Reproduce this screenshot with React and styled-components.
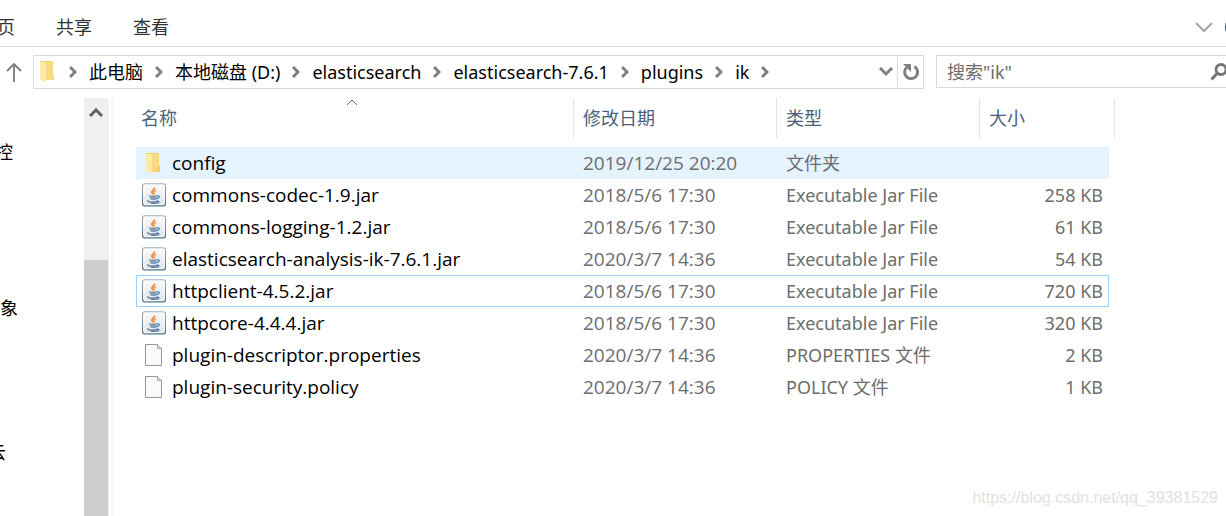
import React from "react";
import styled, { createGlobalStyle } from "styled-components";

const GlobalStyle = createGlobalStyle`
  * {
    box-sizing: border-box;
  }
  body {
    margin: 0;
    background: #fff;
    color: #000;
    font-family: "Noto Sans", "Noto Sans CJK SC", sans-serif;
    font-size: 18px;
    line-height: 24px;
  }
  button, input {
    font: inherit;
    color: inherit;
    border: none;
    padding: 0;
    background: none;
  }
  svg {
    display: block;
    flex-shrink: 0;
  }
`;

const Page = styled.div`
  position: relative;
  display: flex;
  flex-direction: column;
  min-height: 100vh;
  overflow: hidden;
`;

const Ribbon = styled.div`
  display: flex;
  align-items: center;
  justify-content: space-between;
  height: 47px;
  padding-top: 8px;
  margin-right: -23px;
  border-bottom: 1px solid #dadbdc;
`;

const Tabs = styled.nav`
  display: flex;
  gap: 41px;
  margin-left: -21px;
`;

const Tab = styled.button`
  color: #333;
`;

const RibbonTools = styled.div`
  display: flex;
  align-items: center;
  gap: 12px;
`;

const Toolbar = styled.div`
  display: flex;
  padding-top: 8px;
  margin-right: -13px;
`;

const IconButton = styled.button`
  display: flex;
  align-items: center;
  justify-content: center;
  width: ${(props) => props.$width}px;
`;

const UpButton = styled(IconButton)`
  padding-right: 6px;
`;

const AddressBar = styled.div`
  display: flex;
  flex: 1;
  height: 34px;
  border: 1px solid #d9d9d9;
`;

const Crumbs = styled.div`
  display: flex;
  flex: 1;
  align-items: center;
  padding-left: 6px;
`;

const Crumb = styled.a`
  color: #000;
  text-decoration: none;
  white-space: nowrap;
`;

const CrumbArrow = styled.span`
  display: flex;
  justify-content: center;
  width: 32px;
`;

const Refresh = styled(IconButton)`
  border-left: 1px solid #d9d9d9;
`;

const SearchBox = styled.label`
  display: flex;
  align-items: center;
  width: 303px;
  height: 33px;
  margin-left: 12px;
  padding: 0 10px;
  border: 1px solid #d9d9d9;
`;

const SearchInput = styled.input`
  flex: 1;
  min-width: 0;
  outline: none;
  &::placeholder {
    color: #6d6d6d;
    opacity: 1;
  }
`;

const Body = styled.div`
  display: flex;
  flex: 1;
  padding-top: 9px;
`;

const Sidebar = styled.aside`
  display: flex;
  width: 113px;
  border-right: 2px solid #f7f7f7;
`;

const Tree = styled.div`
  flex: 1;
  padding-top: 42px;
`;

const TreeItem = styled.div`
  height: ${(props) => props.$height}px;
  margin-left: ${(props) => -props.$cut}px;
`;

const ScrollTrack = styled.div`
  width: 25px;
  margin-right: 2px;
  padding-right: 1px;
  display: flex;
  flex-direction: column;
  background: #f0f0f0;
`;

const ScrollUp = styled.button`
  display: flex;
  justify-content: center;
  height: 162px;
  padding-top: 10px;
`;

const ScrollThumb = styled.div`
  flex: 1;
  background: #cdcdcd;
`;

const Files = styled.main`
  flex: 1;
  padding-left: 23px;
`;

const Table = styled.table`
  table-layout: fixed;
  width: 979px;
  border-collapse: separate;
  border-spacing: 0;
`;

const HeadCell = styled.th`
  padding: 0 0 9px;
  font-weight: normal;
  text-align: left;
  color: #4c607a;
`;

const HeadLabel = styled.div`
  display: flex;
  flex-direction: column;
  justify-content: flex-end;
  height: 40px;
  padding: 0 0 8px ${(props) => (props.$first ? 5 : 9)}px;
  border-right: 1px solid #e5e5e5;
`;

const SortMark = styled.span`
  display: flex;
  justify-content: center;
  padding: 2px 10px 0 0;
`;

const Row = styled.tr`
  td {
    background: ${(props) => (props.$state === "hover" ? "#e5f3ff" : "none")};
    border: 0 solid ${(props) => (props.$state === "focus" ? "#99d1ff" : "transparent")};
    border-width: 1px 0;
  }
  td:first-child {
    border-left-width: 1px;
  }
  td:last-child {
    border-right-width: 1px;
  }
`;

const Cell = styled.td`
  height: 32px;
  padding: 0 5px 0 9px;
  color: #6d6d6d;
  text-align: ${(props) => (props.$right ? "right" : "left")};
  white-space: nowrap;
`;

const NameCell = styled(Cell)`
  padding-left: 5px;
  color: #000;
  font-family: "Open Sans", "Noto Sans CJK SC", sans-serif;
  font-size: 19px;
`;

const DateCell = styled(Cell)`
  font-family: "Open Sans", "Noto Sans CJK SC", sans-serif;
  font-size: 19px;
`;

const FileName = styled.div`
  display: flex;
  align-items: center;
  gap: 6px;
`;

const Watermark = styled.div`
  position: absolute;
  right: 8px;
  bottom: 6px;
  color: #e2e2e2;
  font-family: "Liberation Sans", sans-serif;
  font-size: 16px;
`;

const Chevron = ({ d, width, height, color = "#808080", stroke = 3 }) => (
  <svg width={width} height={height} viewBox={`0 0 ${width} ${height}`} fill="none">
    <path d={d} stroke={color} strokeWidth={stroke} />
  </svg>
);

const FolderIcon = () => (
  <svg width="24" height="24" viewBox="0 0 24 24">
    <path d="M9 2h8v13l1 1v5H9z" fill="#f8da80" />
    <path d="M17 15l1 1v5h-5z" fill="#f1cc6a" />
    <path d="M4 2h2l4 3v17l-1 1-5-3z" fill="#ffe9a6" />
    <path d="M4 2h10v1H6z" fill="#f5d066" />
  </svg>
);

const JarIcon = () => (
  <svg width="24" height="24" viewBox="0 0 24 24" fill="none">
    <defs>
      <linearGradient id="jar" x1="0" y1="0" x2="0" y2="1">
        <stop offset="0" stopColor="#fdfdfd" />
        <stop offset="1" stopColor="#dfe2e4" />
      </linearGradient>
      <linearGradient id="jarEdge" x1="0" y1="0" x2="0" y2="1">
        <stop offset="0" stopColor="#9db0be" />
        <stop offset="1" stopColor="#4f6b80" />
      </linearGradient>
    </defs>
    <rect x="0.6" y="0.8" width="22.8" height="22" rx="2" fill="url(#jar)" stroke="url(#jarEdge)" strokeWidth="1.2" />
    <rect x="1.8" y="2" width="20.4" height="19.6" rx="1" stroke="#fff" />
    <path d="M12.400 4.500c1.200 1.800-2.600 2.700-2.600 4.500 0 1 .9 1.500 1.400 2.400" stroke="#ee8130" strokeWidth="1.700" />
    <path d="M14.300 7.500c-2 .8-2.800 1.500-2.100 2.500.4.600.2 1.100-.3 1.600" stroke="#ee8130" strokeWidth="1.100" />
    <path d="M7 12.700c1.500.9 6 .9 8 0" stroke="#55799a" strokeWidth="1.200" />
    <path d="M7.800 14.200h7v1.600c0 1.500-6 1.600-6.600.3z" fill="#7e9ab2" />
    <path d="M15 13c3.200-.7 2.600 2.200-.2 2.700" stroke="#55799a" strokeWidth="1.200" />
    <path d="M6.500 17.500c-3.500 1.600 6 2.400 10.500.4M9 20.300c3.500.4 7 0 8.500-1.200" stroke="#55799a" strokeWidth="1.200" />
  </svg>
);

const FileIcon = () => (
  <svg width="24" height="24" viewBox="0 0 24 24" fill="none">
    <path d="M3.500 1.500h12l4 4v17h-16z" fill="#f9fafa" stroke="#979797" />
    <path d="M15.500 1.500v4h4" fill="#e5e5e5" stroke="#a0a0a0" />
  </svg>
);

const icons = { folder: FolderIcon, jar: JarIcon, file: FileIcon };

const crumbs = ["此电脑", "本地磁盘 (D:)", "elasticsearch", "elasticsearch-7.6.1", "plugins", "ik"];

const files = [
  { icon: "folder", name: "config", date: "2019/12/25 20:20", type: "文件夹", size: "", state: "hover" },
  { icon: "jar", name: "commons-codec-1.9.jar", date: "2018/5/6 17:30", type: "Executable Jar File", size: "258 KB" },
  { icon: "jar", name: "commons-logging-1.2.jar", date: "2018/5/6 17:30", type: "Executable Jar File", size: "61 KB" },
  { icon: "jar", name: "elasticsearch-analysis-ik-7.6.1.jar", date: "2020/3/7 14:36", type: "Executable Jar File", size: "54 KB" },
  { icon: "jar", name: "httpclient-4.5.2.jar", date: "2018/5/6 17:30", type: "Executable Jar File", size: "720 KB", state: "focus" },
  { icon: "jar", name: "httpcore-4.4.4.jar", date: "2018/5/6 17:30", type: "Executable Jar File", size: "320 KB" },
  { icon: "file", name: "plugin-descriptor.properties", date: "2020/3/7 14:36", type: "PROPERTIES 文件", size: "2 KB" },
  { icon: "file", name: "plugin-security.policy", date: "2020/3/7 14:36", type: "POLICY 文件", size: "1 KB" },
];

const FileRow = ({ file }) => {
  const Icon = icons[file.icon];
  return (
    <Row $state={file.state}>
      <NameCell>
        <FileName>
          <Icon />
          {file.name}
        </FileName>
      </NameCell>
      <DateCell>{file.date}</DateCell>
      <Cell>{file.type}</Cell>
      <Cell $right>{file.size}</Cell>
    </Row>
  );
};

const App = () => {
  return (
    <Page>
      <GlobalStyle />
      <Ribbon>
        <Tabs>
          <Tab>主页</Tab>
          <Tab>共享</Tab>
          <Tab>查看</Tab>
        </Tabs>
        <RibbonTools>
          <IconButton $width={18} aria-label="Expand ribbon">
            <Chevron width={18} height={12} d="M1 2l8 8 8-8" color="#a6a6a6" stroke={2} />
          </IconButton>
          <IconButton $width={24} aria-label="Help">
            <svg width="24" height="24" viewBox="0 0 24 24">
              <circle cx="12" cy="12" r="12" fill="#0f4a7b" />
            </svg>
          </IconButton>
        </RibbonTools>
      </Ribbon>
      <Toolbar>
        <UpButton $width={33} aria-label="Up">
          <svg width="17" height="20" viewBox="0 0 17 20" fill="none" stroke="#7a7a7a" strokeWidth="1.8">
            <path d="M2 9l7-7 7 7M9 2v18" />
          </svg>
        </UpButton>
        <AddressBar>
          <Crumbs>
            <svg width="17" height="24" viewBox="4 1 17 24">
              <path d="M9 2h8v13l1 1v5H9z" fill="#f8da80" />
              <path d="M4 2h2l4 3v17l-1 1-5-3z" fill="#ffe9a6" />
              <path d="M4 2h10v1H6z" fill="#f5d066" />
            </svg>
            <CrumbArrow>
              <Chevron width={8} height={12} d="M1 1l5 5-5 5" />
            </CrumbArrow>
            {crumbs.map((crumb) => (
              <React.Fragment key={crumb}>
                <Crumb href="#">{crumb}</Crumb>
                <CrumbArrow>
                  <Chevron width={8} height={12} d="M1 1l5 5-5 5" />
                </CrumbArrow>
              </React.Fragment>
            ))}
          </Crumbs>
          <IconButton $width={22} aria-label="Previous locations">
            <Chevron width={14} height={10} d="M1 1l6 6 6-6" />
          </IconButton>
          <Refresh $width={26} aria-label="Refresh">
            <svg width="18" height="18" viewBox="0 0 18 18" fill="none">
              <path d="M12.500 3.500a6.500 6.500 0 1 1-8 1" stroke="#808080" strokeWidth="3" />
              <path d="M1 1h8v8z" fill="#808080" />
            </svg>
          </Refresh>
        </AddressBar>
        <SearchBox>
          <SearchInput type="text" placeholder={'搜索"ik"'} aria-label="搜索" />
          <svg width="18" height="18" viewBox="0 0 18 18" fill="none" stroke="#757575">
            <circle cx="11" cy="6.500" r="5" strokeWidth="2.800" />
            <path d="M7.500 10L1.500 16.500" strokeWidth="3" />
          </svg>
        </SearchBox>
      </Toolbar>
      <Body>
        <Sidebar>
          <Tree>
            <TreeItem $height={156} $cut={5}>控</TreeItem>
            <TreeItem $height={144} $cut={0}>象</TreeItem>
            <TreeItem $height={24} $cut={12}>云</TreeItem>
          </Tree>
          <ScrollTrack>
            <ScrollUp aria-label="Scroll up">
              <Chevron width={14} height={10} d="M1 8l6-6 6 6" color="#606060" />
            </ScrollUp>
            <ScrollThumb />
          </ScrollTrack>
        </Sidebar>
        <Files>
          <Table>
            <colgroup>
              <col width="438" />
              <col width="203" />
              <col width="203" />
              <col width="129" />
              <col width="6" />
            </colgroup>
            <thead>
              <tr>
                <HeadCell>
                  <HeadLabel $first>
                    <SortMark>
                      <Chevron width={12} height={7} d="M1 6l5-5 5 5" color="#6d6d6d" stroke={1} />
                    </SortMark>
                    名称
                  </HeadLabel>
                </HeadCell>
                <HeadCell>
                  <HeadLabel>修改日期</HeadLabel>
                </HeadCell>
                <HeadCell>
                  <HeadLabel>类型</HeadLabel>
                </HeadCell>
                <HeadCell colSpan={2}>
                  <HeadLabel>大小</HeadLabel>
                </HeadCell>
              </tr>
            </thead>
            <tbody>
              {files.map((file) => (
                <FileRow key={file.name} file={file} />
              ))}
            </tbody>
          </Table>
        </Files>
      </Body>
      <Watermark>https://blog.csdn.net/qq_39381529</Watermark>
    </Page>
  );
};

export default App;
